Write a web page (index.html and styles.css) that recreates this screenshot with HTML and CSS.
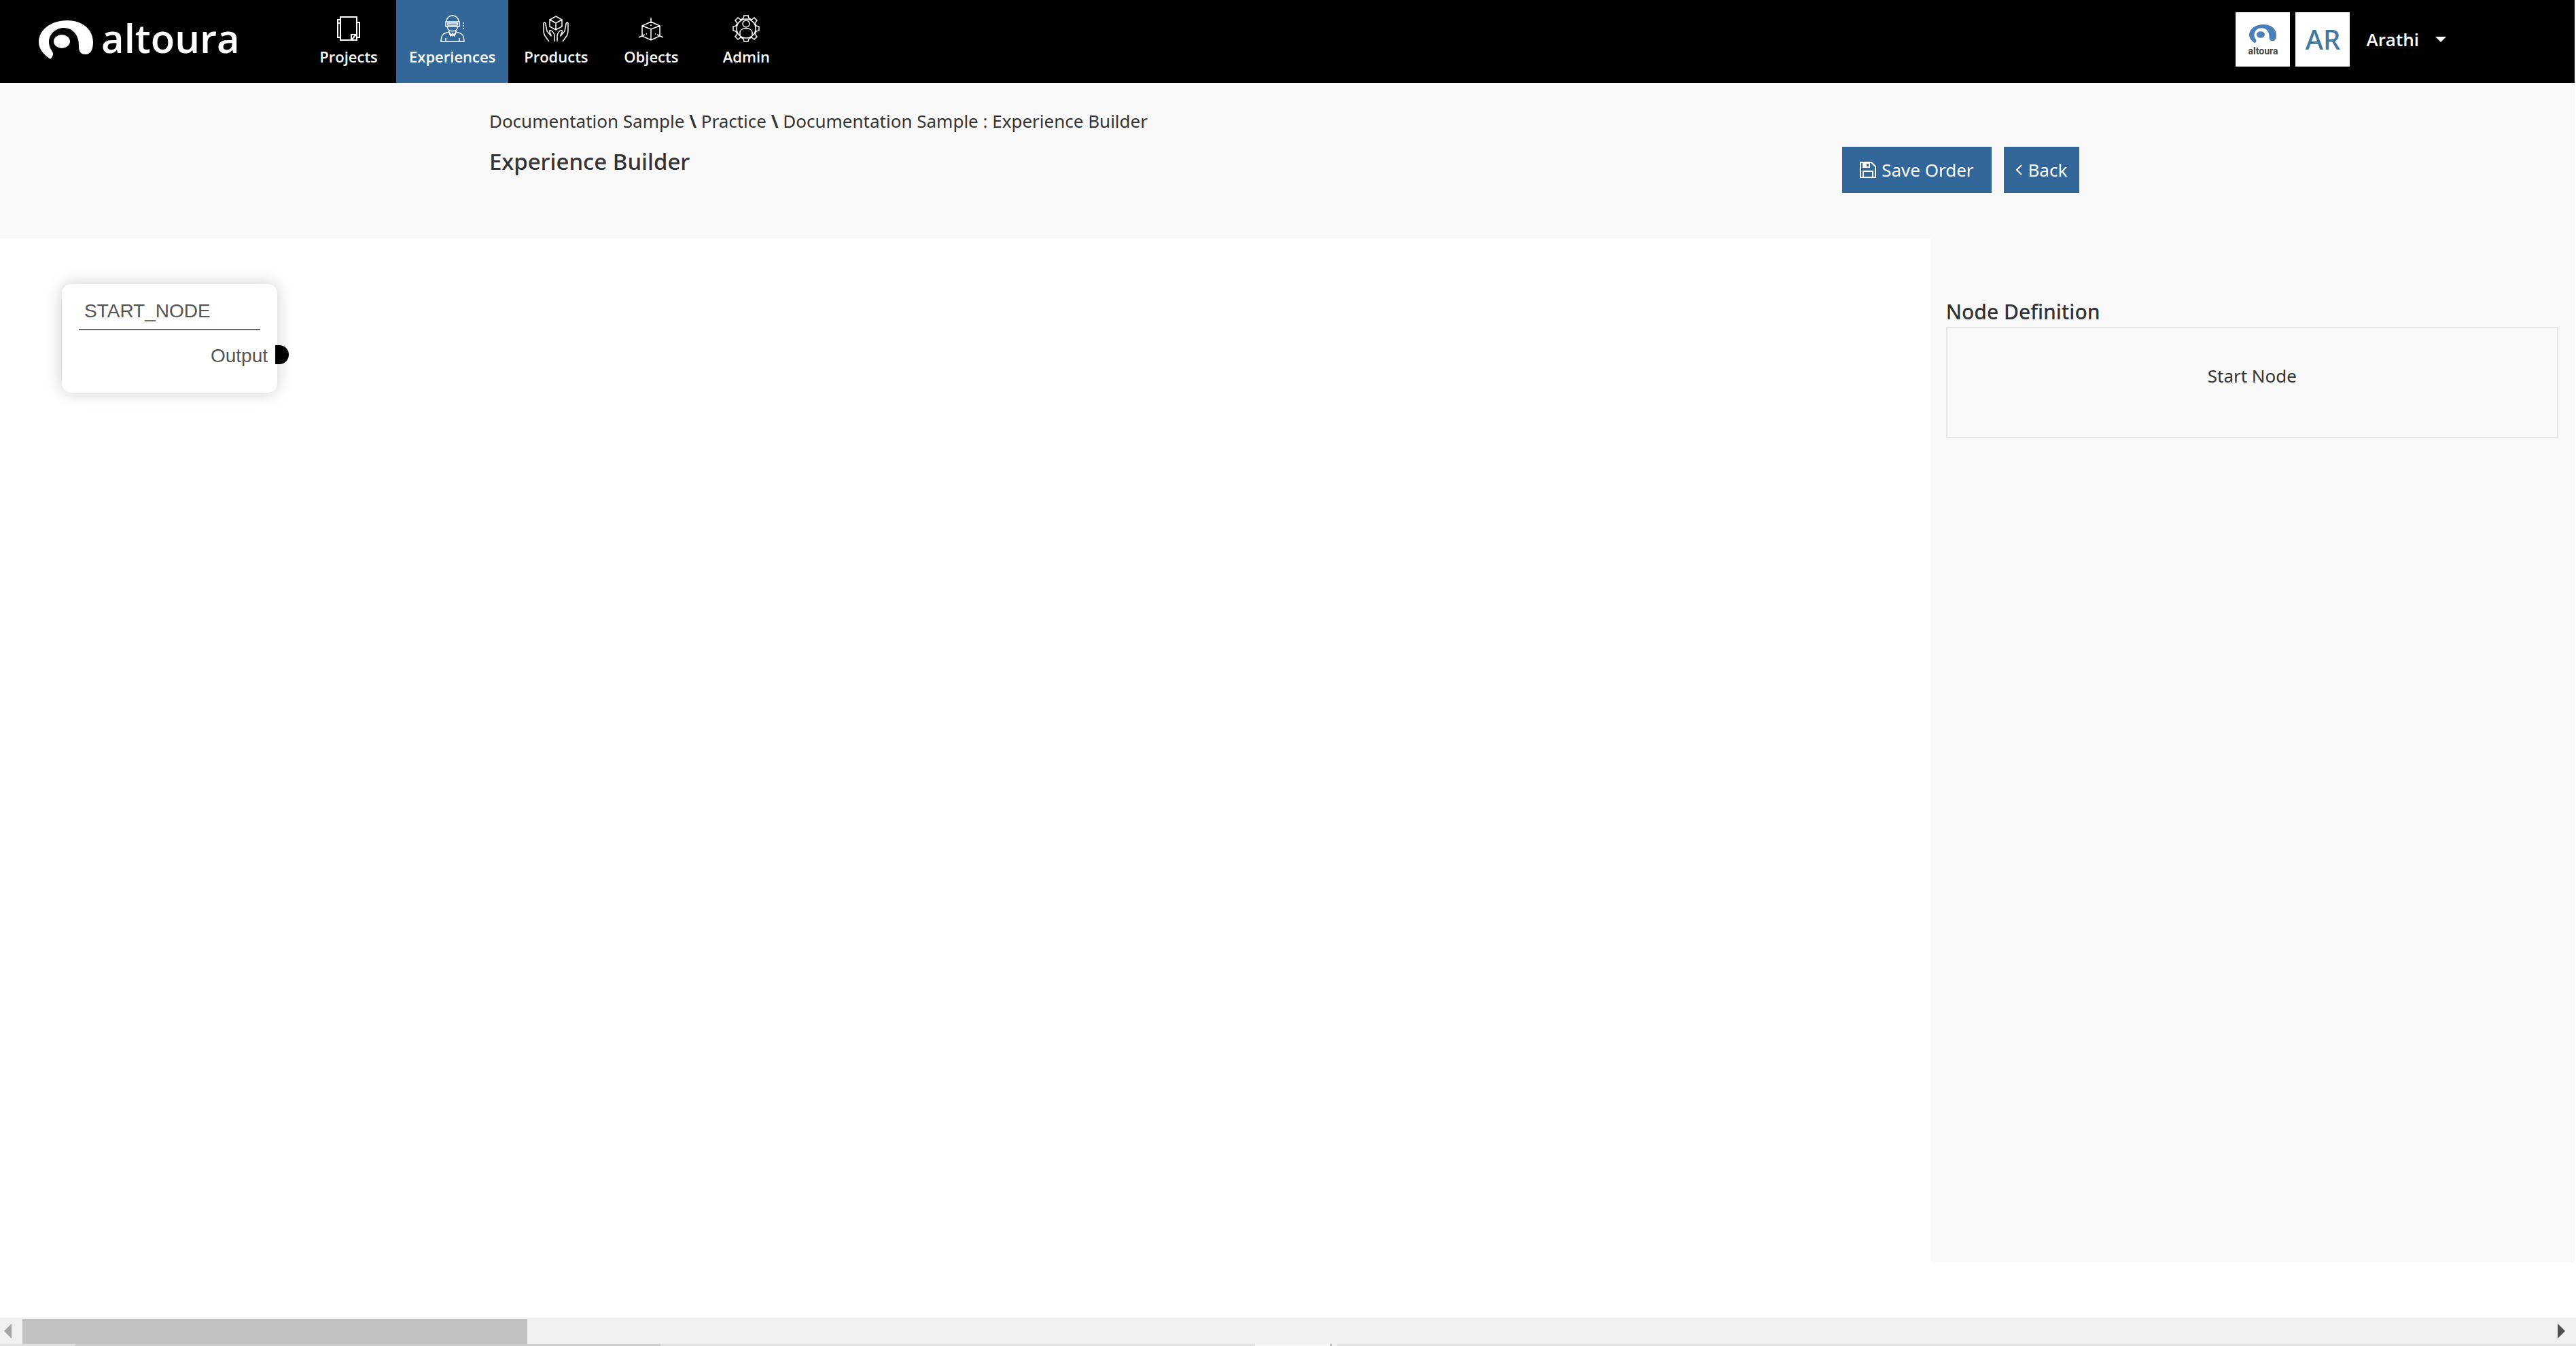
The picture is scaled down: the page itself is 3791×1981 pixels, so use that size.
FILE: index.html
```html
<!DOCTYPE html>
<html lang="en">
<head>
    <meta charset="UTF-8">
    <meta name="viewport" content="width=device-width, initial-scale=1.0">
    <title>Experience Builder</title>
    <link rel="stylesheet" href="styles.css">
</head>
<body>
<header class="navbar">
    <a href="#" class="brand">
        <svg class="brand-mark" viewBox="0 0 80 58" aria-hidden="true">
            <path d="M17 57C7 50 0 42 0 32C0 14 18 0 42 0C65 0 80 14 80 32C80 42 77 50 69 50C61 50 59 45 59 39C60 22 50 11 37 11C24 11 15 21 15 32C15 42 22 46 21 50Q20 55 17 57Z"/>
            <ellipse cx="34" cy="31" rx="12" ry="10"/>
        </svg>
        <span class="brand-name">altoura</span>
    </a>
    <nav class="menu">
        <a href="#" class="menu-item">
            <svg class="menu-icon" viewBox="0 0 40 40" aria-hidden="true">
                <path class="thick" d="M8 3H32V37H8ZM24 37V29H32M31 29L24 37M8 7H4V33H8M4 12H8M32 11H36V33H32"/>
            </svg>
            Projects
        </a>
        <a href="#" class="menu-item active">
            <svg class="menu-icon" viewBox="0 0 40 40" aria-hidden="true">
                <path d="M11 10C11 -2 29 -2 29 10M10 10H30V17H10ZM13 12H27V15H13ZM12 17C13 26 27 26 28 17M15 23V26L20 31L25 26V23M15 26L17 31L20 27L23 31L25 26M3 40C3 29 6 27 15 25M37 40C37 29 34 27 25 25M3 39H37M10 39V34M30 39V34M36 11V13M36 15V17M36 19V21"/>
            </svg>
            Experiences
        </a>
        <a href="#" class="menu-item">
            <svg class="menu-icon" viewBox="0 0 40 40" aria-hidden="true">
                <path d="M20 2L29 7V17L20 22L11 17V7ZM11 7L20 12L29 7M20 12V22M10 39C4 31 2 30 2 22V12C4 10 5 12 5 14L7 24L13 31C14 29 9 25 11 23C14 22 18 27 18 31V39M30 39C36 31 38 30 38 22V12C36 10 35 12 35 14L33 24L27 31C26 29 31 25 29 23C26 22 22 27 22 31V39"/>
            </svg>
            Products
        </a>
        <a href="#" class="menu-item">
            <svg class="menu-icon" viewBox="0 0 40 40" aria-hidden="true">
                <path d="M20 10L33 16V31L20 37L7 31V16ZM7 16L20 21L33 16M20 21V37M20 4V12M20 14V16M2 33L11 29M13 28H14M38 33L29 29M27 28H26"/>
            </svg>
            Objects
        </a>
        <a href="#" class="menu-item">
            <svg class="menu-icon" viewBox="0 0 40 40" aria-hidden="true">
                <path d="M17 1H23L24 5L28 7L32 4L36 8L33 12L35 16L39 17V23L35 24L33 28L36 32L32 36L28 33L24 35L23 39H17L16 35L12 33L8 36L4 32L7 28L5 24L1 23V17L5 16L7 12L4 8L8 4L12 7L16 5Z"/>
                <circle cx="20" cy="20" r="14"/>
                <circle cx="20" cy="13" r="5"/>
                <path d="M11 31V25C12 18 28 18 29 25V31"/>
            </svg>
            Admin
        </a>
    </nav>
    <div class="account">
        <div class="tile">
            <svg class="tile-mark" viewBox="0 0 80 58" preserveAspectRatio="none" aria-hidden="true">
                <path d="M17 57C7 50 0 42 0 32C0 14 18 0 42 0C65 0 80 14 80 32C80 42 77 50 69 50C61 50 59 45 59 39C60 22 50 11 37 11C24 11 15 21 15 32C15 42 22 46 21 50Q20 55 17 57Z"/>
                <ellipse cx="34" cy="31" rx="12" ry="10"/>
            </svg>
            <span class="tile-name">altoura</span>
        </div>
        <div class="tile initials">AR</div>
        <button class="user-menu" type="button">Arathi <span class="caret"></span></button>
    </div>
</header>

<section class="page-header">
    <div class="container">
        <div>
            <nav class="breadcrumb">
                <a href="#">Documentation Sample</a> <b>\</b>
                <a href="#">Practice</a> <b>\</b>
                <span>Documentation Sample : Experience Builder</span>
            </nav>
            <h1>Experience Builder</h1>
        </div>
        <div class="actions">
            <button class="btn btn-save" type="button">
                <svg class="save-icon" viewBox="0 0 24 24" aria-hidden="true">
                    <path d="M1 1H17L23 7V23H1ZM5 23V14H19V23"/>
                    <path class="solid" d="M4 1H15V9H4Z"/>
                    <path class="slot" d="M10 3H13V7H10Z"/>
                </svg>
                Save Order
            </button>
            <button class="btn btn-back" type="button">
                <svg class="back-icon" viewBox="0 0 10 16" aria-hidden="true"><path d="M9 1L2 8L9 15"/></svg>
                Back
            </button>
        </div>
    </div>
</section>

<main class="builder">
    <div class="canvas">
        <div class="node">
            <div class="node-title">START_NODE</div>
            <div class="node-output">Output</div>
            <span class="connector"></span>
        </div>
    </div>
    <aside class="sidebar">
        <h2>Node Definition</h2>
        <div class="definition">Start Node</div>
    </aside>
</main>

<footer class="scrollbar">
    <div class="track">
        <button class="arrow arrow-left" type="button" aria-label="Scroll left"></button>
        <div class="thumb"></div>
        <button class="arrow arrow-right" type="button" aria-label="Scroll right"></button>
    </div>
    <div class="edge"></div>
</footer>
</body>
</html>
```
FILE: styles.css
```css
* {
    box-sizing: border-box;
}
body {
    margin: 0;
    padding-right: 2px;
    min-height: 100vh;
    display: flex;
    flex-direction: column;
    background-color: #fff;
    color: #333;
    font-family: "Noto Sans", "Open Sans", sans-serif;
    font-size: 26px;
}
a {
    color: inherit;
    text-decoration: none;
}
button {
    font: inherit;
    border: none;
    border-radius: 0;
    cursor: pointer;
}
h1, h2 {
    margin: 0;
    font-weight: 500;
}

/* Top bar */
.navbar {
    display: flex;
    height: 122px;
    padding: 0 181px 0 57px;
    background-color: #000;
    color: #fff;
}
.brand {
    display: flex;
    align-items: flex-start;
    gap: 12px;
    width: 386px;
    padding-top: 30px;
}
.brand-mark {
    width: 80px;
    height: 58px;
    fill: #fff;
}
.brand-name {
    font-family: "Open Sans", sans-serif;
    font-size: 58px;
    font-weight: 600;
    line-height: 52px;
}
.menu {
    display: flex;
}
.menu-item {
    display: flex;
    flex-direction: column;
    align-items: center;
    min-width: 140px;
    padding: 22px 19px 0;
    font-family: "Open Sans", sans-serif;
    font-size: 22px;
    font-weight: 600;
    line-height: 42px;
}
.menu-item.active {
    background-color: #336699;
}
.menu-icon {
    width: 40px;
    height: 40px;
    fill: none;
    stroke: #fff;
    stroke-width: 1.5;
}
.menu-icon .thick {
    stroke-width: 2;
}
.account {
    display: flex;
    align-items: flex-start;
    gap: 8px;
    margin-left: auto;
    padding-top: 18px;
}
.tile {
    display: flex;
    flex-direction: column;
    align-items: center;
    width: 80px;
    height: 80px;
    padding-top: 18px;
    background-color: #fff;
}
.tile-mark {
    width: 40px;
    height: 28px;
    fill: #4a7fb8;
}
.tile-name {
    color: #444;
    font-family: Roboto, sans-serif;
    font-size: 14px;
    font-weight: 700;
    line-height: 22px;
}
.initials {
    padding: 0;
    color: #41789f;
    font-size: 40px;
    font-weight: 500;
    line-height: 80px;
}
.user-menu {
    display: flex;
    align-items: center;
    gap: 24px;
    height: 80px;
    padding: 0 8px 0 16px;
    background: none;
    color: #fff;
    font-family: "Open Sans", sans-serif;
    font-weight: 600;
}
.caret {
    border: 8px solid transparent;
    border-top-color: #fff;
    border-bottom: none;
}

/* Title and actions */
.page-header {
    height: 229px;
    background-color: #f9f9f9;
}
.container {
    display: flex;
    justify-content: space-between;
    max-width: 2340px;
    margin-left: 19%;
    padding-top: 36px;
}
.breadcrumb {
    line-height: 40px;
}
h1 {
    margin-top: 18px;
    font-size: 33px;
    line-height: 44px;
}
.actions {
    display: flex;
    gap: 18px;
    padding-top: 58px;
}
.btn {
    display: flex;
    align-items: center;
    justify-content: center;
    gap: 8px;
    height: 68px;
    padding: 0;
    background-color: #336699;
    color: #fff;
}
.btn-save {
    width: 220px;
}
.btn-back {
    width: 111px;
}
.save-icon {
    width: 24px;
    height: 24px;
    fill: none;
    stroke: #fff;
    stroke-width: 2;
}
.save-icon .solid {
    fill: #fff;
    stroke: none;
}
.save-icon .slot {
    fill: #336699;
    stroke: none;
}
.back-icon {
    width: 10px;
    height: 16px;
    fill: none;
    stroke: #fff;
    stroke-width: 2;
}

/* Builder */
.builder {
    flex: 1;
    display: grid;
    grid-template-columns: 3fr 1fr;
    margin-bottom: 81px;
}
.canvas {
    position: relative;
}
.node {
    position: absolute;
    left: 91px;
    top: 67px;
    width: 317px;
    height: 160px;
    padding: 20px 14px 0 25px;
    border-radius: 14px;
    background-color: #fff;
    box-shadow: 0 0 24px rgba(0, 0, 0, 0.2);
    color: #555;
    font-family: "Liberation Sans", Arial, sans-serif;
    font-size: 28px;
}
.node-title {
    width: 267px;
    padding: 0 8px 6px;
    border-bottom: 2px solid #666;
    line-height: 40px;
}
.node-output {
    margin-top: 18px;
    text-align: right;
    line-height: 40px;
}
.connector {
    position: absolute;
    right: -17px;
    top: 90px;
    width: 20px;
    height: 28px;
    border-radius: 0 14px 14px 0;
    background-color: #000;
}
.sidebar {
    padding: 86px 24px 0 22px;
    background-color: #f9f9f9;
}
h2 {
    font-size: 30px;
    line-height: 44px;
}
.definition {
    height: 164px;
    padding-top: 50px;
    border: 2px solid #e5e5e5;
    text-align: center;
    line-height: 40px;
}

/* Horizontal scroll bar */
.scrollbar {
    margin-right: -2px;
}
.track {
    display: flex;
    align-items: center;
    height: 39px;
    background-color: #f0f0f0;
}
.arrow {
    display: flex;
    width: 33px;
    padding: 0 6px;
    background: none;
}
.arrow::before {
    content: "";
    border: 11px solid transparent;
}
.arrow-left::before {
    border-left: none;
    border-right-color: #a3a3a3;
}
.arrow-right {
    margin-left: auto;
}
.arrow-right::before {
    border-right: none;
    border-left-color: #505050;
}
.thumb {
    align-self: flex-end;
    width: 19.6%;
    height: 37px;
    background-color: #c1c1c1;
}
.edge {
    height: 3px;
    background: linear-gradient(to right, #e0e0e0 111px, #ccc 111px 972px, #e0e0e0 972px 1847px, #f5f5f5 1847px 1957px, #bbb 1957px 1960px, #f0f0f0 1960px 1968px, #e0e0e0 1968px);
}
```
